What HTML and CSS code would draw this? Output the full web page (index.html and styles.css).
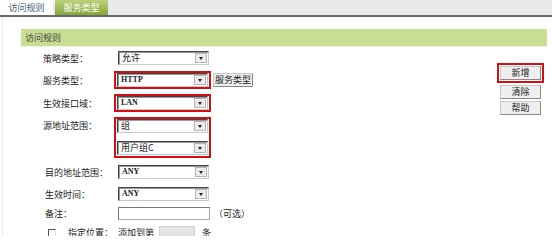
FILE: index.html
```html
<!DOCTYPE html>
<html>
    <head>
        <meta charset="utf-8">
        <title>访问规则</title>
        <link rel="stylesheet" href="styles.css">
    </head>
    <body>

        <div class="tabs">
            <div class="tab on">访问规则</div>
            <div class="tab green">服务类型</div>
        </div>

        <div class="page">

            <div class="head">访问规则</div>

            <div class="body">

                <div class="form">

                    <div class="row r1">
                        <div class="label">策略类型：</div>
                        <div class="sel"><span class="val">允许</span><span class="arr"></span></div>
                    </div>

                    <div class="row r2">
                        <div class="label">服务类型：</div>
                        <div class="mark">
                            <div class="sel"><span class="val latin">HTTP</span><span class="arr"></span></div>
                        </div>
                        <div class="btn svc">服务类型</div>
                    </div>

                    <div class="row r3">
                        <div class="label">生效接口域：</div>
                        <div class="mark">
                            <div class="sel"><span class="val latin">LAN</span><span class="arr"></span></div>
                        </div>
                    </div>

                    <div class="row r4">
                        <div class="label">源地址范围：</div>
                        <div class="mark stack">
                            <div class="sel"><span class="val">组</span><span class="arr"></span></div>
                            <div class="sel"><span class="val">用户组C</span><span class="arr"></span></div>
                        </div>
                    </div>

                    <div class="row r5">
                        <div class="label shift">目的地址范围：</div>
                        <div class="sel"><span class="val latin">ANY</span><span class="arr"></span></div>
                    </div>

                    <div class="row r6">
                        <div class="label shift">生效时间：</div>
                        <div class="sel"><span class="val latin">ANY</span><span class="arr"></span></div>
                    </div>

                    <div class="row r7">
                        <div class="label shift">备注：</div>
                        <div class="text"></div>
                        <span class="hint">（可选）</span>
                    </div>

                    <div class="row r8">
                        <div class="label"><span class="check"></span>指定位置：</div>
                        <span>添加到第</span>
                        <div class="num"></div>
                        <span class="unit">条</span>
                    </div>

                </div>

                <div class="side">
                    <div class="mark">
                        <div class="btn">新增</div>
                    </div>
                    <div class="btn">清除</div>
                    <div class="btn">帮助</div>
                </div>

            </div>

        </div>

    </body>
</html>
```

FILE: styles.css
```css
/** Page **/
body {
    margin: 0;
    font-family: "Noto Sans CJK SC", sans-serif;
    font-size: 9px;
    color: #222;
    background-color: #fff;
}

/** Tabs **/
.tabs {
    display: flex;
    height: 15px;
    background-color: #e9e9e9;
    border-bottom: 2px solid #6a6a6a;
}
.tab {
    width: 53px;
    line-height: 15px;
    text-align: center;
    color: #4a5f7a;
}
.tab.on {
    background-color: #fff;
}
.tab.green {
    margin-left: 2px;
    color: #fff;
    background: linear-gradient(#bcd37a, #86a63c);
}

/** Section **/
.page {
    margin-left: 2px;
    padding: 12px 0 0 18px;
    border-left: 1px solid #e6efd2;
    height: 207px;
}
.head {
    height: 17px;
    line-height: 17px;
    margin-right: 5px;
    padding-left: 4px;
    background-color: #c8df92;
    border-bottom: 1px solid #f0f6e0;
    color: #4a4a4a;
}
.body {
    display: flex;
}

/** Form **/
.form {
    flex: 1;
    padding: 4px 0 0 22px;
}
.row {
    display: flex;
    align-items: center;
}
.label {
    display: flex;
    align-items: center;
    width: 75px;
    flex-shrink: 0;
}
.label.shift {
    padding-left: 2px;
    width: 73px;
}
.r2 { margin-top: 6px; }
.r3 { margin-top: 5px; }
.r4 { margin-top: 5px; align-items: flex-start; }
.r4 .label { line-height: 14px; margin-top: 2px; }
.r5 { margin-top: 7px; }
.r6 { margin-top: 8px; }
.r7 { margin-top: 6px; }
.r8 { margin-top: 6px; }

/** Highlight **/
.mark {
    border: 2px solid #d40f14;
    padding: 0 1px;
}
.form .mark {
    margin-left: -4px;
}
.mark.stack {
    display: flex;
    flex-direction: column;
    gap: 8px;
    padding-bottom: 1px;
}

/** Select **/
.sel {
    display: flex;
    align-items: center;
    justify-content: space-between;
    box-sizing: border-box;
    width: 91px;
    height: 14px;
    border: 1px solid;
    border-color: #444 #c8c8c8 #c8c8c8 #444;
    box-shadow: inset 1px 1px #9a9a9a;
    background-color: #fff;
}
.val {
    padding-left: 3px;
    line-height: 12px;
}
.val.latin {
    font-family: "Liberation Serif", serif;
    font-weight: bold;
    font-size: 8px;
}
.arr {
    position: relative;
    box-sizing: border-box;
    width: 12px;
    height: 10px;
    margin-right: 1px;
    background-color: #ececec;
    border: 1px solid #b4b4b4;
}
.arr::after {
    content: "";
    position: absolute;
    left: 3px;
    top: 3px;
    border-left: 2px solid transparent;
    border-right: 2px solid transparent;
    border-top: 3px solid #222;
}

/** Inputs **/
.text {
    box-sizing: border-box;
    width: 92px;
    height: 13px;
    border: 1px solid #aaa;
    border-top-color: #777;
    border-left-color: #777;
}
.hint {
    margin-left: 4px;
}
.check {
    box-sizing: border-box;
    width: 8px;
    height: 8px;
    margin: 0 12px 0 5px;
    border: 1px solid;
    border-color: #555 #ddd #ddd #555;
}
.num {
    box-sizing: border-box;
    width: 36px;
    height: 13px;
    margin-left: 5px;
    background-color: #e4e4e4;
    border: 1px solid #cfcfcf;
}
.unit {
    margin-left: 7px;
}

/** Buttons **/
.btn {
    box-sizing: border-box;
    width: 41px;
    height: 14px;
    line-height: 12px;
    text-align: center;
    background-color: #efefef;
    border: 1px solid #8a8a8a;
    border-top-color: #c8c8c8;
    border-left-color: #c8c8c8;
}
.btn.svc {
    width: 40px;
    margin-left: 2px;
}
.side {
    display: flex;
    flex-direction: column;
    align-items: center;
    gap: 2px;
    width: 47px;
    margin-right: 8px;
    padding-top: 16px;
}
.side .mark {
    padding: 1px 1px;
}
.side .btn:last-child {
    margin-top: 0;
}
```
